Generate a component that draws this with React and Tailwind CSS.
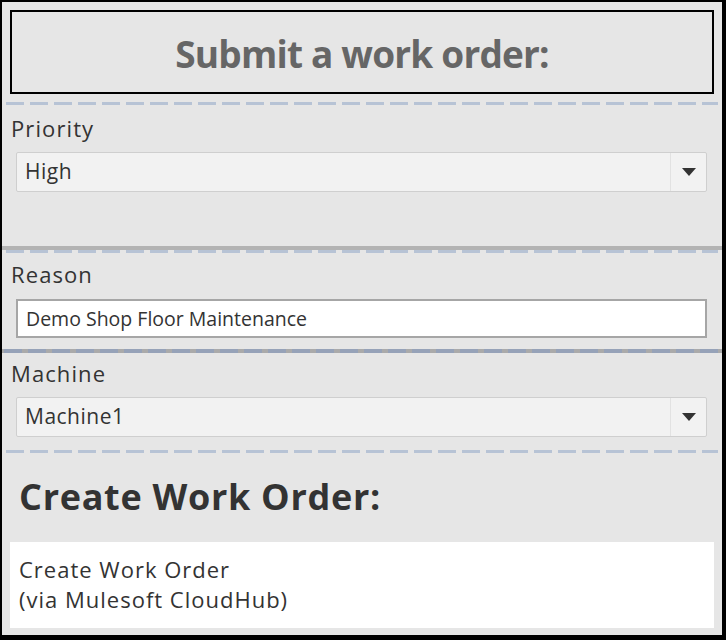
import React from "react";

const font = { fontFamily: '"Open Sans", "Noto Sans", sans-serif' };

function Dashed({ color = "light" }) {
  if (color === "dark") {
    return (
      <div className="h-[4px] bg-[repeating-linear-gradient(90deg,#aaaaaa_0_2px,#96a2b8_2px_20px,#aaaaaa_20px_24px)]" />
    );
  }
  return (
    <div className="h-[3px] ml-[4px] mr-[4px] bg-[repeating-linear-gradient(90deg,#b7c3d5_0_18px,transparent_18px_24px)]" />
  );
}

function Select({ value }) {
  return (
    <div className="ml-[14px] mr-[15px] h-[40px] flex items-stretch bg-[#f2f2f2] border border-[#cfcfcf] rounded-[2px]">
      <div className="flex-1 flex items-center pl-[8px] text-[21px] tracking-[0.5px] text-[#333333]">{value}</div>
      <div className="w-[36px] border-l border-[#e2e2e2] flex items-center justify-center">
        <svg width="14" height="8" viewBox="0 0 14 8">
          <path d="M0 0 L14 0 L7 8 Z" fill="#333333" />
        </svg>
      </div>
    </div>
  );
}

function Label({ children, className = "" }) {
  return (
    <div className={"pl-[9px] h-[28px] text-[22px] leading-[28px] tracking-[1.1px] text-[#333333] " + className}>
      {children}
    </div>
  );
}

export default function App() {
  return (
    <div className="w-[726px] h-[640px] bg-black pt-[2px] pl-[2px] pr-[4px] pb-[5px]" style={font}>
      <div className="bg-[#e6e6e6] h-full flex flex-col">
        <div className="mt-[8px] ml-[8px] mr-[8px] h-[84px] border-2 border-black flex items-center justify-center pt-[3px]">
          <span className="text-[37px] font-bold text-[#666666] leading-none tracking-[-0.8px]">Submit a work order:</span>
        </div>
        <div className="mt-[8px]">
          <Dashed />
        </div>
        <Label className="mt-[9px]">Priority</Label>
        <div className="mt-[10px]">
          <Select value="High" />
        </div>
        <div className="mt-[54px] h-[4px] bg-[#b3b3b3]" />
        <Dashed />
        <Label className="mt-[7px]">Reason</Label>
        <div className="mt-[11px] ml-[14px] mr-[15px] h-[39px] bg-white border-2 border-[#a6a6a6] flex items-center pl-[8px] text-[19.5px] text-[#333333]">
          Demo Shop Floor Maintenance
        </div>
        <div className="mt-[11px]">
          <Dashed color="dark" />
        </div>
        <Label className="mt-[6px]">Machine</Label>
        <div className="mt-[10px]">
          <Select value="Machine1" />
        </div>
        <div className="mt-[13px]">
          <Dashed />
        </div>
        <div className="mt-[22px] pl-[17px] h-[44px] text-[36px] leading-[44px] font-bold tracking-[0.7px] text-[#333333]">Create Work Order:</div>
        <div className="mt-[23px] ml-[8px] mr-[8px] h-[86px] bg-white pl-[9px] pt-[12px] text-[22px] leading-[30px] tracking-[1px] text-[#333333]">
          <div>Create Work Order</div>
          <div>(via Mulesoft CloudHub)</div>
        </div>
      </div>
    </div>
  );
}
